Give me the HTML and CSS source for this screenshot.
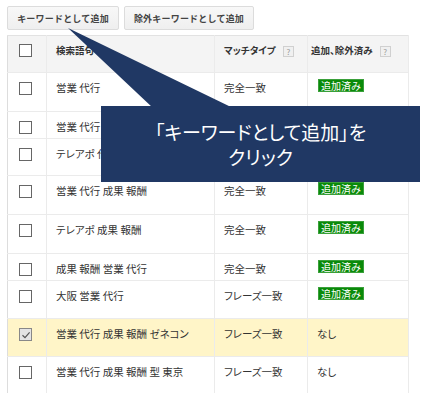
FILE: index.html
```html
<!DOCTYPE html>
<html lang="ja">
<head>
<meta charset="utf-8">
<title>キーワード</title>
<link rel="stylesheet" href="styles.css">
</head>
<body>
<div class="page">
  <div class="toolbar">
    <button class="btn btn-add">キーワードとして追加</button>
    <button class="btn btn-exclude">除外キーワードとして追加</button>
  </div>
  <table class="kw">
    <colgroup>
      <col class="w-check"><col class="w-term"><col class="w-match"><col class="w-status">
    </colgroup>
    <thead>
      <tr class="r-head">
        <th class="c-check"><span class="cb"></span></th>
        <th>検索語句</th>
        <th>マッチタイプ <span class="help">?</span></th>
        <th class="c-status-h">追加、除外済み <span class="help">?</span></th>
      </tr>
    </thead>
    <tbody>
      <tr class="r39">
        <td class="c-check"><span class="cb"></span></td><td>営業 代行</td><td>完全一致</td><td class="c-status"><span class="badge">追加済み</span></td>
      </tr>
      <tr class="r27">
        <td class="c-check"><span class="cb"></span></td><td>営業 代行 成果</td><td>完全一致</td><td class="c-status"><span class="badge">追加済み</span></td>
      </tr>
      <tr class="r37">
        <td class="c-check"><span class="cb"></span></td><td>テレアポ 代行</td><td>完全一致</td><td class="c-status"><span class="badge">追加済み</span></td>
      </tr>
      <tr class="r39">
        <td class="c-check"><span class="cb"></span></td><td>営業 代行 成果 報酬</td><td>完全一致</td><td class="c-status"><span class="badge">追加済み</span></td>
      </tr>
      <tr class="r39">
        <td class="c-check"><span class="cb"></span></td><td>テレアポ 成果 報酬</td><td>完全一致</td><td class="c-status"><span class="badge">追加済み</span></td>
      </tr>
      <tr class="r27">
        <td class="c-check"><span class="cb"></span></td><td>成果 報酬 営業 代行</td><td>完全一致</td><td class="c-status"><span class="badge">追加済み</span></td>
      </tr>
      <tr class="r38">
        <td class="c-check"><span class="cb"></span></td><td>大阪 営業 代行</td><td>フレーズ一致</td><td class="c-status"><span class="badge">追加済み</span></td>
      </tr>
      <tr class="r38 selected">
        <td class="c-check"><span class="cb checked"><svg viewBox="0 0 10 10" width="10" height="10"><path d="M1.5 5.2 L4 7.6 L8.6 2.4" fill="none" stroke="#555" stroke-width="1.2"/></svg></span></td><td>営業 代行 成果 報酬 ゼネコン</td><td>フレーズ一致</td><td>なし</td>
      </tr>
      <tr class="r36 last">
        <td class="c-check"><span class="cb"></span></td><td>営業 代行 成果 報酬 型 東京</td><td>フレーズ一致</td><td>なし</td>
      </tr>
    </tbody>
  </table>

  <svg class="callout-arrow" width="436" height="120" viewBox="0 0 436 120">
    <polygon points="68,28 153,108 233,108" fill="#203864"/>
  </svg>
  <div class="callout">
    <span class="callout-line">「キーワードとして追加」を</span>
    <span class="callout-line">クリック</span>
  </div>
</div>
</body>
</html>
```

FILE: styles.css
```css
html, body {
  margin: 0;
  padding: 0;
  background: #ffffff;
}

.page {
  position: relative;
  width: 436px;
  height: 402px;
  padding: 6px 0 0 7px;
  box-sizing: border-box;
  font-family: "Noto Sans CJK JP", "Noto Sans", sans-serif;
  color: #333333;
  overflow: hidden;
}

.toolbar {
  display: flex;
  gap: 5px;
  height: 24px;
  margin-bottom: 5px;
}

.btn {
  height: 24px;
  padding: 0;
  border: 1px solid #dcdcdc;
  border-radius: 2px;
  background: linear-gradient(#f8f8f8, #efefef);
  font-family: "Noto Sans CJK JP", sans-serif;
  font-size: 9px;
  font-weight: bold;
  color: #444444;
  letter-spacing: 0.2px;
  cursor: pointer;
}

.btn-add { width: 112px; }
.btn-exclude { width: 130px; }

.kw {
  border-collapse: collapse;
  table-layout: fixed;
  width: 401px;
  font-size: 10.5px;
  line-height: 14px;
  font-feature-settings: "palt";
}

.w-check { width: 39px; }
.w-term { width: 168px; }
.w-match { width: 93px; }
.w-status { width: 101px; }

.kw th,
.kw td {
  border: 1px solid #ebebeb;
  padding: 8px 0 0 9px;
  vertical-align: top;
  text-align: left;
  white-space: nowrap;
}

.kw th {
  background: #f4f4f4;
  font-size: 9.5px;
  font-weight: bold;
  line-height: 12px;
  padding-top: 8px;
  border-top-color: #e2e2e2;
}

.kw tr > :first-child {
  border-left-color: #dddddd;
}

.kw th.c-status-h {
  padding-left: 3px;
}

.kw .c-check {
  padding: 9px 0 0 11px;
}

.kw th.c-check {
  padding-top: 8px;
}

.r-head { height: 37px; }
.r39 { height: 39px; }
.r38 { height: 38px; }
.r37 { height: 37px; }
.r36 { height: 36px; }
.r27 { height: 27px; }

.kw tr.last td {
  border-bottom: none;
}

.selected td {
  background: #fff5c8;
}

.kw td.c-status {
  padding-top: 6px;
  padding-left: 10px;
}

.cb {
  display: block;
  width: 11px;
  height: 11px;
  border: 1px solid #666666;
  background: #ffffff;
}

.cb.checked {
  border-color: #888888;
  background: #e4e4e4;
  display: flex;
  align-items: center;
  justify-content: center;
}

.help {
  display: inline-block;
  width: 9px;
  height: 9px;
  margin-left: 5px;
  border: 1px solid #d0d0d0;
  background: #f0f0f0;
  color: #999999;
  font-size: 8px;
  line-height: 9px;
  font-weight: normal;
  text-align: center;
  vertical-align: -1px;
}

.badge {
  display: inline-block;
  height: 11px;
  padding: 0 2px;
  background: #0a8a0a;
  border: 1px solid #3aa03a;
  color: #ffffff;
  font-size: 10px;
  line-height: 11px;
}

.callout-arrow {
  position: absolute;
  left: 0;
  top: 0;
}

.callout {
  position: absolute;
  left: 101px;
  top: 106px;
  width: 319px;
  height: 76px;
  background: #203864;
  color: #ffffff;
  font-family: "Noto Sans CJK JP", sans-serif;
  font-size: 19px;
  line-height: 25px;
  font-feature-settings: "palt";
  display: flex;
  flex-direction: column;
  align-items: center;
  justify-content: center;
}

.callout-line {
  display: block;
}
```
